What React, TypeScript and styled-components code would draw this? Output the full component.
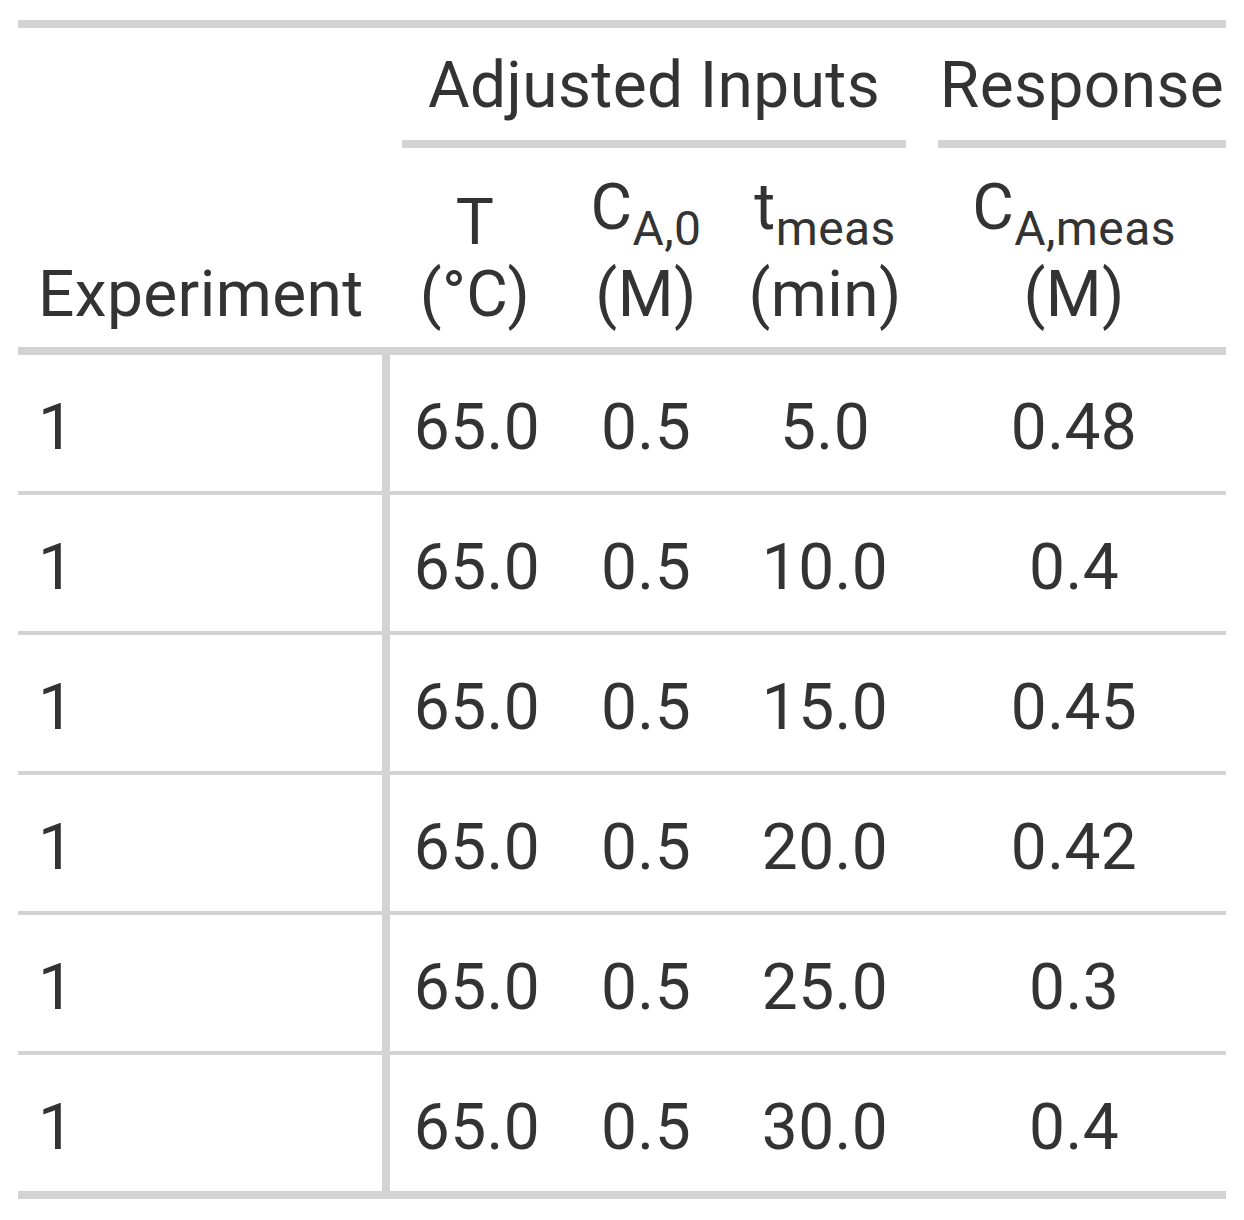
import styled, { createGlobalStyle } from 'styled-components';

const GlobalStyle = createGlobalStyle`
    body {
        margin: 0;
        background: #ffffff;
    }
`;

const Page = styled.div`
    padding: 20px 18px 0 18px;
`;

const Table = styled.table`
    border-collapse: collapse;
    table-layout: fixed;
    width: 1208px;
    font-family: Roboto, "Liberation Sans", sans-serif;
    font-size: 64px;
    letter-spacing: 0.4px;
    color: #333333;
    border-top: 8px solid #d3d3d3;
    border-bottom: 8px solid #d3d3d3;
`;

const HeadCell = styled.th<{ $align?: 'left' | 'center' }>`
    font-weight: normal;
    line-height: 72px;
    padding: 24px 20px 16px 20px;
    vertical-align: bottom;
    text-align: ${(p) => p.$align ?? 'center'};
    overflow-x: hidden;
    white-space: nowrap;
    border-bottom: 8px solid #d3d3d3;
`;

const SpannerOuter = styled.th<{ $last?: boolean }>`
    font-weight: normal;
    padding: 0 ${(p) => (p.$last ? '0' : '16px')} 0 16px;
    vertical-align: bottom;
    text-align: center;
`;

const Spanner = styled.div`
    line-height: 72px;
    padding: 22px 0 18px 0;
    border-bottom: 8px solid #d3d3d3;
    overflow-x: hidden;
    white-space: nowrap;
`;

// subscript pushes its own line 16px lower, like the rendered markdown units
const Sub = styled.sub`
    font-size: 75%;
    line-height: 61px;
    vertical-align: -16px;
`;

const BodyRow = styled.tr`
    border-top: 4px solid #d3d3d3;
`;

const StubCell = styled.th`
    font-weight: normal;
    text-align: left;
    line-height: 72px;
    padding: 37px 20px 27px 20px;
    border-right: 8px solid #d3d3d3;
`;

const Cell = styled.td`
    text-align: center;
    line-height: 72px;
    padding: 37px 20px 27px 20px;
`;

const rows = [
    { exp: 1, t: '65.0', ca0: '0.5', time: '5.0', ca: '0.48' },
    { exp: 1, t: '65.0', ca0: '0.5', time: '10.0', ca: '0.4' },
    { exp: 1, t: '65.0', ca0: '0.5', time: '15.0', ca: '0.45' },
    { exp: 1, t: '65.0', ca0: '0.5', time: '20.0', ca: '0.42' },
    { exp: 1, t: '65.0', ca0: '0.5', time: '25.0', ca: '0.3' },
    { exp: 1, t: '65.0', ca0: '0.5', time: '30.0', ca: '0.4' },
];

const App = () => (
    <Page>
        <GlobalStyle />
        <Table>
            <colgroup>
                <col style={{ width: 368 }} />
                <col style={{ width: 178 }} />
                <col style={{ width: 164 }} />
                <col style={{ width: 194 }} />
                <col style={{ width: 304 }} />
            </colgroup>
            <thead>
                <tr>
                    <HeadCell rowSpan={2} $align="left">Experiment</HeadCell>
                    <SpannerOuter colSpan={3}>
                        <Spanner>Adjusted Inputs</Spanner>
                    </SpannerOuter>
                    <SpannerOuter colSpan={1} $last>
                        <Spanner>Response</Spanner>
                    </SpannerOuter>
                </tr>
                <tr>
                    <HeadCell>T<br />(°C)</HeadCell>
                    <HeadCell>C<Sub>A,0</Sub><br />(M)</HeadCell>
                    <HeadCell>t<Sub>meas</Sub><br />(min)</HeadCell>
                    <HeadCell>C<Sub>A,meas</Sub><br />(M)</HeadCell>
                </tr>
            </thead>
            <tbody>
                {rows.map((r, i) => (
                    <BodyRow key={i}>
                        <StubCell>{r.exp}</StubCell>
                        <Cell>{r.t}</Cell>
                        <Cell>{r.ca0}</Cell>
                        <Cell>{r.time}</Cell>
                        <Cell>{r.ca}</Cell>
                    </BodyRow>
                ))}
            </tbody>
        </Table>
    </Page>
);

export default App;
